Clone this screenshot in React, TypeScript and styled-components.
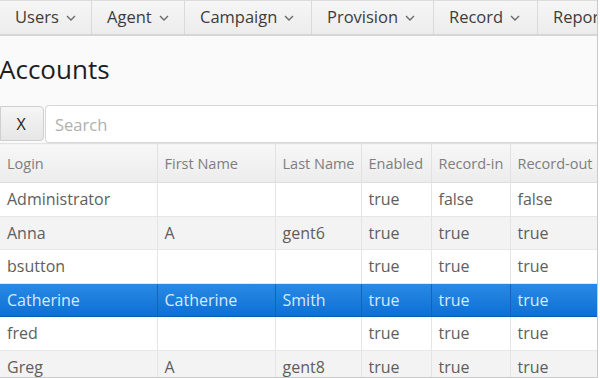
import styled, { createGlobalStyle } from 'styled-components';

const GlobalStyle = createGlobalStyle`
  html, body {
    margin: 0;
    padding: 0;
    background: #ffffff;
    overflow: hidden;
  }
  body {
    font-family: "Open Sans", "Noto Sans", sans-serif;
  }
`;

interface Account {
  login: string;
  firstName: string;
  lastName: string;
  enabled: string;
  recordIn: string;
  recordOut: string;
}

const accounts: Account[] = [
  { login: 'Administrator', firstName: '', lastName: '', enabled: 'true', recordIn: 'false', recordOut: 'false' },
  { login: 'Anna', firstName: 'A', lastName: 'gent6', enabled: 'true', recordIn: 'true', recordOut: 'true' },
  { login: 'bsutton', firstName: '', lastName: '', enabled: 'true', recordIn: 'true', recordOut: 'true' },
  { login: 'Catherine', firstName: 'Catherine', lastName: 'Smith', enabled: 'true', recordIn: 'true', recordOut: 'true' },
  { login: 'fred', firstName: '', lastName: '', enabled: 'true', recordIn: 'true', recordOut: 'true' },
  { login: 'Greg', firstName: 'A', lastName: 'gent8', enabled: 'true', recordIn: 'true', recordOut: 'true' },
];

const menus = [
  { label: 'Users', width: 92 },
  { label: 'Agent', width: 93 },
  { label: 'Campaign', width: 127 },
  { label: 'Provision', width: 122 },
  { label: 'Record', width: 104 },
  { label: 'Reports', width: 100 },
];

const columns = [
  { title: 'Login', width: 157 },
  { title: 'First Name', width: 118 },
  { title: 'Last Name', width: 86 },
  { title: 'Enabled', width: 70 },
  { title: 'Record-in', width: 79 },
  { title: 'Record-out', width: 87 },
];

const Frame = styled.div`
  width: 597px;
  height: 377px;
  border-right: 1px solid #c9c9c9;
  border-bottom: 1px solid #c9c9c9;
  background: #fafafa;
  overflow: hidden;
  display: flex;
  flex-direction: column;
`;

const NavBar = styled.nav`
  display: flex;
  height: 33px;
  flex-shrink: 0;
  border-top: 1px solid #dcdcdc;
  border-bottom: 2px solid #d6d6d6;
  background: linear-gradient(#f6f6f6, #ececec);
  overflow: hidden;
`;

const NavItem = styled.div<{ $width: number }>`
  flex: 0 0 ${p => p.$width}px;
  display: flex;
  align-items: center;
  gap: 7px;
  padding: 0 0 2px 15px;
  box-sizing: border-box;
  border-right: 1px solid #dadada;
  font-size: 16.5px;
  color: #3c3c3c;
  white-space: nowrap;
`;

const Chevron = styled.svg`
  width: 10px;
  height: 6px;
  margin-top: 3px;
`;

const Content = styled.main`
  flex: 1;
  display: flex;
  flex-direction: column;
`;

const Title = styled.h1`
  margin: 17px 0 0 -1px;
  height: 52px;
  font-size: 26px;
  font-weight: 400;
  color: #1e1e1e;
  line-height: 32px;
`;

const SearchRow = styled.div`
  display: flex;
  height: 38px;
  box-sizing: border-box;
`;

const ClearButton = styled.button`
  flex: 0 0 44px;
  height: 35px;
  margin-top: 1px;
  border: 1px solid #cfcfcf;
  border-radius: 0 4px 4px 0;
  background: linear-gradient(#f5f5f5, #e6e6e6);
  font-family: "Open Sans", sans-serif;
  font-size: 16px;
  color: #222;
  padding: 0 2px 0 0;
`;

const SearchInput = styled.input`
  flex: 1;
  height: 38px;
  margin-left: 1px;
  box-sizing: border-box;
  border: 1px solid #d8d8d8;
  border-right: none;
  border-radius: 4px 0 0 4px;
  background: #fff;
  padding: 0 9px;
  font-family: "Open Sans", sans-serif;
  font-size: 16.5px;
  color: #444;
  &::placeholder {
    color: #b0b0b0;
  }
`;

const Table = styled.table`
  width: 597px;
  table-layout: fixed;
  border-collapse: collapse;
  font-size: 16px;
`;

const HeadCell = styled.th<{ $width: number }>`
  width: ${p => p.$width}px;
  height: 39px;
  box-sizing: border-box;
  padding: 0 0 0 7px;
  text-align: left;
  font-weight: 400;
  font-size: 14.5px;
  color: #7e7e7e;
  background: linear-gradient(#f7f7f7, #ececec);
  border-left: 1px solid #e2e2e2;
  border-bottom: 1px solid #dedede;
  border-top: 1px solid #e2e2e2;
  white-space: nowrap;
  overflow: hidden;
  &:first-child {
    border-left: none;
  }
`;

const Row = styled.tr<{ $striped: boolean; $selected: boolean }>`
  height: 33.5px;
  background: ${p =>
    p.$selected
      ? 'linear-gradient(#2a8ae6, #0c6fd3)'
      : p.$striped
        ? '#f3f3f3'
        : '#ffffff'};
  color: ${p => (p.$selected ? '#d6e9fd' : '#5e5e5e')};
  & > td {
    border-left: 1px solid ${p => (p.$selected ? '#1a62b5' : '#e4e4e4')};
    border-bottom: 1px solid ${p => (p.$selected ? '#0a5cb0' : '#e6e6e6')};
  }
  & > td:first-child {
    border-left: none;
  }
`;

const Cell = styled.td`
  padding: 0 0 0 7px;
  white-space: nowrap;
  overflow: hidden;
`;

function App() {
  return (
    <>
      <GlobalStyle />
      <Frame>
        <NavBar>
          {menus.map(m => (
            <NavItem key={m.label} $width={m.width}>
              {m.label}
              <Chevron viewBox="0 0 10 6">
                <path d="M1 1l4 4 4-4" fill="none" stroke="#6a6a6a" strokeWidth="1.4" />
              </Chevron>
            </NavItem>
          ))}
        </NavBar>
        <Content>
          <Title>Accounts</Title>
          <SearchRow>
            <ClearButton>X</ClearButton>
            <SearchInput placeholder="Search" />
          </SearchRow>
          <Table>
            <thead>
              <tr>
                {columns.map(c => (
                  <HeadCell key={c.title} $width={c.width}>
                    {c.title}
                  </HeadCell>
                ))}
              </tr>
            </thead>
            <tbody>
              {accounts.map((a, i) => (
                <Row key={a.login} $striped={i % 2 === 1} $selected={a.login === 'Catherine'}>
                  <Cell>{a.login}</Cell>
                  <Cell>{a.firstName}</Cell>
                  <Cell>{a.lastName}</Cell>
                  <Cell>{a.enabled}</Cell>
                  <Cell>{a.recordIn}</Cell>
                  <Cell>{a.recordOut}</Cell>
                </Row>
              ))}
            </tbody>
          </Table>
        </Content>
      </Frame>
    </>
  );
}

export default App;
